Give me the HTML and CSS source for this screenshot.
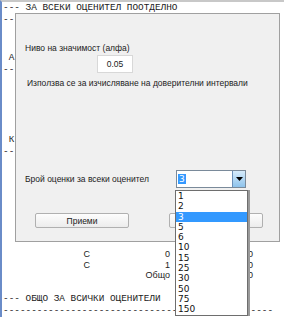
FILE: index.html
```html
<!DOCTYPE html>
<html lang="bg">
<head>
  <meta charset="UTF-8">
  <title>Параметри</title>
  <link rel="stylesheet" href="styles.css">
</head>
<body>
  <div class="screen">
    <!-- Report text behind the dialog -->
    <div class="report">
      <div class="mono line1">--- ЗА ВСЕКИ ОЦЕНИТЕЛ ПООТДЕЛНО</div>
      <div class="mono">------------------------------------------------</div>
      <div class="mono gap1">&nbsp;А</div>
      <div class="mono">------------------------------------------------</div>
      <div class="mono gap2">&nbsp;К</div>
      <div class="mono">------------------------------------------------</div>

      <div class="stats">
        <div class="row"><span class="c1">C</span><span class="c2">0</span><span class="c3">50</span></div>
        <div class="row"><span class="c1">C</span><span class="c2">1</span><span class="c3">50</span></div>
        <div class="row"><span class="c1"></span><span class="c2">Общо</span><span class="c3">50</span></div>
      </div>

      <div class="mono gap3">--- ОБЩО ЗА ВСИЧКИ ОЦЕНИТЕЛИ</div>
      <div class="mono">------------------------------------------------</div>
    </div>

    <!-- Parameters dialog -->
    <div class="dialog">
      <div class="label alpha-label">Ниво на значимост (алфа)</div>
      <input type="text" class="alpha-input" value="0.05">
      <div class="label note">Използва се за изчисляване на доверителни интервали</div>

      <div class="count-row">
        <div class="label">Брой оценки за всеки оценител</div>
        <div class="combo">
          <span class="combo-value"><span class="sel">3</span></span>
          <span class="combo-btn">
            <svg width="7" height="4" viewBox="0 0 7 4"><path d="M0 0h7L3.5 4z" fill="#000"/></svg>
          </span>
        </div>
      </div>

      <div class="buttons">
        <button class="btn">Приеми</button>
        <button class="btn">Отказ</button>
      </div>
    </div>

    <!-- Open dropdown list -->
    <ul class="dropdown">
      <li>1</li>
      <li>2</li>
      <li class="active">3</li>
      <li>5</li>
      <li>6</li>
      <li>10</li>
      <li>15</li>
      <li>25</li>
      <li>30</li>
      <li>50</li>
      <li>75</li>
      <li>150</li>
    </ul>
  </div>
</body>
</html>
```

FILE: styles.css
```css
body {
  margin: 0;
  padding: 0;
  background-color: #ffffff;
  overflow: hidden;
}
.screen {
  position: relative;
  width: 284px;
  height: 317px;
  background-color: #ffffff;
  border-left: 2px solid #6a8cc8;
  border-top: 2px solid #c8c8c8;
  box-sizing: border-box;
  overflow: hidden;
}
.report {
  padding-left: 1px;
}
.mono {
  font-family: "Liberation Mono", monospace;
  font-size: 9.4px;
  line-height: 12px;
  height: 12px;
  white-space: pre;
  color: #222;
}
.gap1 {
  margin-top: 26px;
}
.gap2 {
  margin-top: 58px;
}
.stats {
  margin-top: 91px;
  font-family: "Liberation Sans", sans-serif;
  font-size: 9px;
  color: #222;
}
.stats .row {
  display: flex;
  height: 10.5px;
  line-height: 10.5px;
}
.stats .c1 {
  width: 87px;
  text-align: right;
}
.stats .c2 {
  width: 80px;
  text-align: right;
}
.stats .c3 {
  width: 83px;
  text-align: right;
}
.gap3 {
  margin-top: 12px;
}
.dialog {
  position: absolute;
  left: 13px;
  top: 11px;
  width: 265px;
  height: 229px;
  background-color: #f0f0f0;
  border: 1px solid #a0a0a0;
  box-sizing: border-box;
  font-family: "Liberation Sans", sans-serif;
  font-size: 8.5px;
  color: #222;
  padding: 27px 0 0 9px;
}
.label {
  line-height: 14px;
  white-space: nowrap;
}
.alpha-input {
  display: block;
  margin: 0 0 0 72px;
  width: 36px;
  height: 18px;
  box-sizing: border-box;
  border: 1px solid #d8d8d8;
  background: #fff;
  font-family: "Liberation Sans", sans-serif;
  font-size: 8.5px;
  color: #222;
  text-align: center;
  padding: 0;
}
.note {
  margin: 3px 0 0 2px;
}
.count-row {
  display: flex;
  align-items: center;
  margin-top: 80px;
}
.count-row .label {
  width: 151px;
}
.combo {
  display: flex;
  width: 70px;
  height: 18px;
  box-sizing: border-box;
  border: 1px solid #7a8a9a;
  background: #fff;
}
.combo-value {
  flex: 1;
  padding: 2px 0 0 1px;
  font-family: "DejaVu Sans", sans-serif;
  font-size: 9px;
  line-height: 12px;
}
.sel {
  background-color: #3399ff;
  color: #fff;
  padding: 0 1px;
}
.combo-btn {
  width: 12px;
  display: flex;
  align-items: center;
  justify-content: center;
  background: linear-gradient(#d6ebfb, #8ec3ec);
  border-left: 1px solid #6a8fb8;
}
.buttons {
  display: flex;
  gap: 40px;
  margin: 25px 0 0 10px;
}
.btn {
  width: 94px;
  height: 15px;
  padding: 0;
  background: linear-gradient(#fdfdfd, #ececec);
  border: 1px solid #b0b0b0;
  border-radius: 2px;
  font-family: "Liberation Sans", sans-serif;
  font-size: 8.5px;
  color: #222;
}
.dropdown {
  position: absolute;
  left: 173px;
  top: 188px;
  width: 71px;
  margin: 0;
  padding: 0;
  list-style: none;
  background: #fff;
  border: 1px solid #6e6e6e;
  box-shadow: 2px 0 0 #9a9a9a;
  font-family: "DejaVu Sans", sans-serif;
  font-size: 9px;
  color: #111;
}
.dropdown li {
  height: 10.3px;
  line-height: 10.3px;
  padding-left: 2px;
}
.dropdown li.active {
  background-color: #3399ff;
  color: #fff;
}
```
